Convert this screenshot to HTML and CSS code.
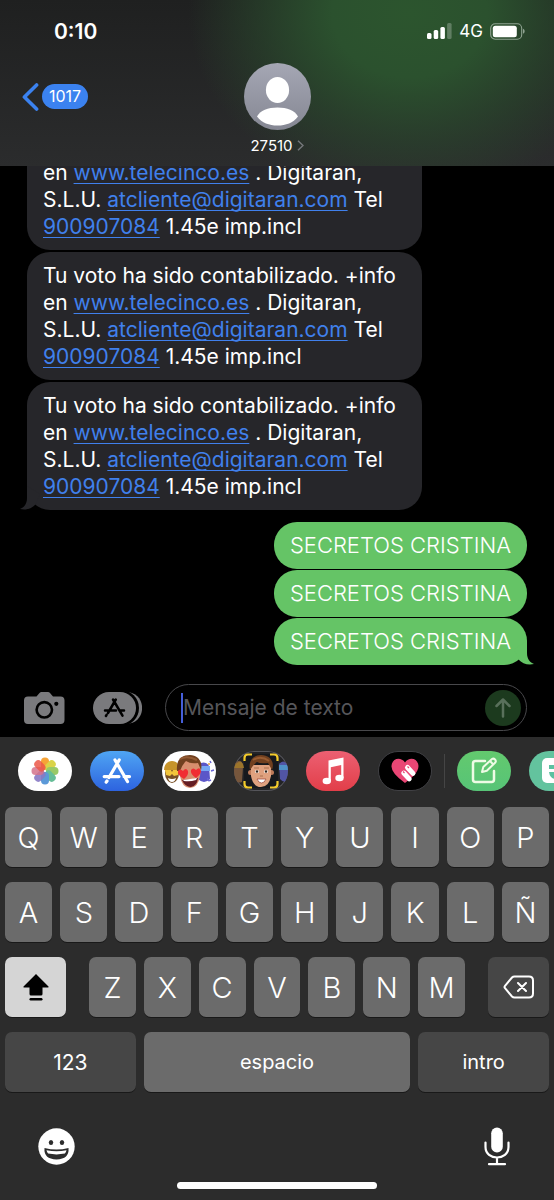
FILE: index.html
```
<!DOCTYPE html>
<html lang="es">
<head>
<meta charset="utf-8">
<meta name="viewport" content="width=device-width, initial-scale=1">
<title>27510</title>
<link rel="stylesheet" href="styles.css">
</head>
<body>
<header class="header">
  <div class="status">
    <time class="clock">0:10</time>
    <div class="status-icons">
      <svg width="25" height="16" viewBox="0 0 25 16" fill="#fff"><rect x="0" y="10" width="4.500" height="6" rx="1.500"/><rect x="6.700" y="7" width="4.500" height="9" rx="1.500"/><rect x="13.400" y="4" width="4.500" height="12" rx="1.500"/><rect x="20.100" y="0" width="4.500" height="16" rx="1.500" opacity=".25"/></svg>
      <span class="network">4G</span>
      <svg width="35" height="17" viewBox="0 0 35 17"><rect x=".7" y=".7" width="31" height="15.600" rx="4.500" fill="none" stroke="#8fa391" stroke-width="1.100"/><rect x="2.800" y="2.800" width="24" height="11.400" rx="2.500" fill="#fff"/><path d="M33 5.800c2.200.8 2.200 4.200 0 5z" fill="#8fa391"/></svg>
    </div>
  </div>
  <div class="nav">
    <button class="back" type="button" aria-label="Atrás, 1017 mensajes">
      <svg width="18" height="28" viewBox="0 0 18 28" fill="none" stroke="#3b82f0" stroke-width="3.600" stroke-linecap="round" stroke-linejoin="round"><path d="M14.600 2 2.400 14l12.200 12"/></svg>
      <span class="count">1017</span>
    </button>
    <button class="contact" type="button">
      <svg width="67" height="67" viewBox="0 0 67 67">
        <defs><linearGradient id="av" x1="0" y1="0" x2="0" y2="1"><stop offset="0" stop-color="#a5a7b4"/><stop offset="1" stop-color="#858793"/></linearGradient></defs>
        <circle cx="33.500" cy="33.500" r="33.500" fill="url(#av)"/>
        <ellipse cx="33.500" cy="27" rx="11.600" ry="13" fill="#fff"/>
        <path d="M13 53.500C16 47.500 24 44.500 33.500 44.500s17.500 3 20.500 9C49 60 42 62.500 33.500 62.500S18 60 13 53.500z" fill="#fff"/>
      </svg>
      <span class="name">27510 <svg width="7" height="11" viewBox="0 0 7 11" fill="none" stroke="#74777a" stroke-width="1.500"><path d="M1 .8 6 5.500 1 10.200"/></svg></span>
    </button>
  </div>
</header>

<main class="chat">
  <p class="bubble in">en <a href="#web">www.telecinco.es</a> . Digitaran, S.L.U. <a href="#mail">atcliente@digitaran.com</a> Tel <a href="#tel">900907084</a> 1.45e imp.incl</p>
  <p class="bubble in">Tu voto ha sido contabilizado. +info en <a href="#web">www.telecinco.es</a> . Digitaran, S.L.U. <a href="#mail">atcliente@digitaran.com</a> Tel <a href="#tel">900907084</a> 1.45e imp.incl</p>
  <p class="bubble in">Tu voto ha sido contabilizado. +info en <a href="#web">www.telecinco.es</a> . Digitaran, S.L.U. <a href="#mail">atcliente@digitaran.com</a> Tel <a href="#tel">900907084</a> 1.45e imp.incl
    <svg class="tail tail-in" width="20" height="24" viewBox="0 0 20 24" fill="#26262a"><path d="M7 0v12c0 6-3 9.500-7 11 6 1.500 12-.5 15.500-4.500L20 8z"/></svg></p>
  <div class="sent">
    <p class="bubble out">SECRETOS CRISTINA</p>
    <p class="bubble out">SECRETOS CRISTINA</p>
    <p class="bubble out">SECRETOS CRISTINA
      <svg class="tail tail-out" width="20" height="24" viewBox="0 0 20 24" fill="#65c466"><path d="M13 0v12c0 6 3 9.500 7 11-6 1.500-12-.5-15.500-4.500L0 8z"/></svg></p>
  </div>
</main>

<form class="composer">
  <button class="tool" type="button" aria-label="Cámara">
    <svg width="41" height="32" viewBox="0 0 41 32"><path d="M4 4.500h8.500L15.500 1Q16.300 0 17.500 0h6.500q1.200 0 2 1l3 3.500h7.500q4 0 4 4V28q0 4-4 4H4q-4 0-4-4V8.500q0-4 4-4z" fill="#7a7a7d"/><circle cx="20.300" cy="17.800" r="7.700" fill="none" stroke="#000" stroke-width="2.600"/><circle cx="32.300" cy="11.800" r="2.100" fill="#000"/></svg>
  </button>
  <button class="tool" type="button" aria-label="Aplicaciones">
    <svg width="49" height="32" viewBox="0 0 49 32"><path d="M33 0c21.500 0 21.500 32 0 32z" fill="#7a7a7d"/><rect x="-1" y="-2" width="47" height="36" rx="18" fill="#000"/><rect width="43" height="32" rx="16" fill="#7a7a7d"/><g fill="none" stroke="#000" stroke-width="2.500" stroke-linecap="round"><path d="M22.800 7.500 15 21M20 7.500l9.500 16.200M12 18.500h11M26.300 18.500H31M13.600 22.800l-.7 1.200"/></g></svg>
  </button>
  <div class="field">
    <span class="caret"></span>
    <input class="entry" type="text" placeholder="Mensaje de texto" aria-label="Mensaje de texto">
    <button class="send" type="button" aria-label="Enviar"><svg width="16" height="20" viewBox="0 0 16 20" fill="none" stroke="#59705b" stroke-width="2.500" stroke-linecap="round" stroke-linejoin="round"><path d="M8 18.500V1.800M1.500 8 8 1.500 14.500 8"/></svg></button>
  </div>
</form>

<section class="keyboard" aria-label="Teclado">
  <nav class="apps">
    <button class="app white" type="button" aria-label="Fotos"><svg width="30" height="30" viewBox="-15 -15 30 30"><g opacity=".9"><rect x="-4" y="-13.500" width="8" height="12.500" rx="4" fill="#f59a22"/><rect x="-4" y="-13.500" width="8" height="12.500" rx="4" fill="#d6cf35" transform="rotate(45)"/><rect x="-4" y="-13.500" width="8" height="12.500" rx="4" fill="#8fc456" transform="rotate(90)"/><rect x="-4" y="-13.500" width="8" height="12.500" rx="4" fill="#55b68c" transform="rotate(135)"/><rect x="-4" y="-13.500" width="8" height="12.500" rx="4" fill="#4a8fd4" transform="rotate(180)"/><rect x="-4" y="-13.500" width="8" height="12.500" rx="4" fill="#7b6abf" transform="rotate(225)" opacity=".9"/><rect x="-4" y="-13.500" width="8" height="12.500" rx="4" fill="#d0647f" transform="rotate(270)" opacity=".85"/><rect x="-4" y="-13.500" width="8" height="12.500" rx="4" fill="#ea4535" transform="rotate(315)" opacity=".85"/></g></svg></button>
    <button class="app store" type="button" aria-label="App Store"><svg width="30" height="26" viewBox="0 0 30 26" fill="none" stroke="#fff" stroke-width="3.200" stroke-linecap="round"><path d="M17.200 2 7 19.500M13 2l12.500 21.500M2.200 18.600H17M22 18.600h5.500M5 23l-.8 1.200"/></svg></button>
    <button class="app white" type="button" aria-label="Stickers de Memoji"><svg width="54" height="40" viewBox="0 0 54 40">
      <ellipse cx="10" cy="22" rx="7" ry="10" fill="#795126"/><path d="M2 19c0-12 16-12 16 0z" fill="#c7942b"/><path d="M3 19h6l1 2 1-2h6l-1 5-4 1-2-2-2 2-4-1z" fill="#f2c53b"/><path d="M6 27q4 2 8 0-1 4-4 4t-4-4z" fill="#fff"/>
      <path d="M36 13q8-4 11 2l1 13q-6 6-12 0z" fill="#5b56c8"/><path d="M36 15h12v5H36z" fill="#76a7f4"/><path d="M46 27q-1 4 3 2M48 10l1 2M49 20l3-1" stroke="#6864d2" stroke-width="1.500" fill="none"/><circle cx="47" cy="13" r="1" fill="#eda239"/>
      <path d="M17 14q0-8 11-8t11 9l-1 10q-2 12-10 12T18 25z" fill="#d88e6e"/><path d="M15 20C14 9 19 4 28 4c8 0 13 7 11 15l-3-7q-8 1-12-2-4 4-6 10z" fill="#71401f"/><path d="M18 8q7-4 17 1" stroke="#935b34" stroke-width="2" fill="none"/>
      <path d="M20 29q8 0 16-2-1 8-7 9-6 0-9-7z" fill="#651d24"/><path d="M21 29l14-2-1 2q-6 2-12 1z" fill="#fff"/>
      <path d="M22 28q-7-4-6-8 2-3 5 0 3-4 5 0 1 4-4 8z" fill="#f02d33"/><path d="M34 27q-6-4-5-8 2-3 5 0 4-4 5 1 0 3-5 7z" fill="#f02d33"/></svg></button>
    <button class="app ink" type="button" aria-label="Memoji"><svg width="54" height="40" viewBox="0 0 54 40">
      <path d="M0 13q8-8 9 3l-1 15q-5 2-8-3z" fill="#76563c"/><path d="M1 14q7-8 9 3H0z" fill="#9b742b"/><path d="M45 13q5-6 9 2v15q-5 2-8-2z" fill="#5155a5"/><path d="M45 14h9v5h-9z" fill="#4f91c7"/>
      <rect x="10" y="3" width="34" height="34" rx="4" fill="#17191d"/><path d="M10.500 10V7q0-3.500 3.500-3.500h4M36 3.500h4q3.500 0 3.500 3.500v3M10.500 30v3q0 3.500 3.500 3.500h4M36 36.500h4q3.500 0 3.500-3.500v-3" fill="none" stroke="#f4cb2c" stroke-width="2.200"/>
      <circle cx="16.500" cy="21.500" r="2.500" fill="#bd7a59"/><circle cx="37.500" cy="21.500" r="2.500" fill="#bd7a59"/><path d="M17 14h20v11q-2 11-10 11t-10-11z" fill="#dfa17f"/><path d="M16 19C14 10 19 4 27 4c9 0 14 7 11 15l-4-7q-8 1-11-1-3 2-7 8z" fill="#71401f"/><path d="M19 9q8-5 16 1" stroke="#975b31" stroke-width="2" fill="none"/><ellipse cx="23" cy="20.500" rx="2" ry="1.600" fill="#fff"/><ellipse cx="32" cy="20.500" rx="2" ry="1.600" fill="#fff"/><circle cx="23" cy="20.500" r="1.200" fill="#302319"/><circle cx="32" cy="20.500" r="1.200" fill="#302319"/><path d="M20 17h5M30 17h5M26 25h3" stroke="#a9704f" stroke-width="1"/><path d="M23 28h9q-1.500 4-4.500 4T23 28z" fill="#fff" stroke="#a14f43" stroke-width=".8"/></svg></button>
    <button class="app music" type="button" aria-label="Música"><svg width="24" height="28" viewBox="0 0 24 28" fill="#fff"><path d="M7.500 3.500 22.500.5V21h-2.300V8L9.800 10.200V24H7.500z"/><ellipse cx="5.800" cy="24" rx="4.200" ry="3.200"/><ellipse cx="18.500" cy="21" rx="4.200" ry="3.200"/></svg></button>
    <button class="app touch" type="button" aria-label="Digital Touch"><svg width="28" height="26" viewBox="0 0 28 26"><path d="M14 25Q0 15 .5 8C1 0 10-1.500 14 4.500 18-1.500 27 0 27.500 8 27.500 14 21 20 14 25z" fill="#ea4675"/><g transform="rotate(-43 18 17)" fill="#fff"><rect x="13" y="9.500" width="5" height="13" rx="2.500"/><rect x="19.500" y="8" width="5" height="13" rx="2.500"/></g><path d="m12 13.500 1.500 1.500M16.500 8.500l1.500 1.500" stroke="#ea4675" stroke-width="1.200"/></svg></button>
    <span class="divider"></span>
    <button class="app note" type="button" aria-label="Notas"><svg width="28" height="28" viewBox="0 0 28 28" fill="none" stroke="#eefbe5" stroke-width="2.500" stroke-linecap="round" stroke-linejoin="round"><path d="M15 4H5.500Q3 4 3 6.500v16Q3 25 5.500 25h16q2.500 0 2.500-2.500V14"/><path stroke-width="2" d="m12 15 1.300-5L22 2q1.500-1 3 .5t.3 3L16.800 13.800zM20 4l3.300 3.500"/></svg></button>
    <button class="app mint" type="button" aria-label="Stickers"><svg width="28" height="28" viewBox="0 0 28 28"><rect y="1" width="27" height="25" rx="5" fill="#fff"/><path d="M7 8h10v4H7zM7 15h14q-1 7-7 7t-7-7z" fill="#5cc0a0"/></svg></button>
  </nav>

  <div class="keys">
    <div class="row"><button class="key">Q</button><button class="key">W</button><button class="key">E</button><button class="key">R</button><button class="key">T</button><button class="key">Y</button><button class="key">U</button><button class="key">I</button><button class="key">O</button><button class="key">P</button></div>
    <div class="row"><button class="key">A</button><button class="key">S</button><button class="key">D</button><button class="key">F</button><button class="key">G</button><button class="key">H</button><button class="key">J</button><button class="key">K</button><button class="key">L</button><button class="key">Ñ</button></div>
    <div class="row row-shift">
      <button class="key shift" aria-label="Mayúsculas"><svg width="26" height="28" viewBox="0 0 26 28"><path d="M13 1 25.500 13.500q.5 1-.5 1h-5.500V21q0 1.500-1.500 1.500H8Q6.500 22.500 6.500 21v-6.500H1q-1 0-.5-1z"/><rect x="6.500" y="25" width="13" height="2.500" rx="1.200"/></svg></button>
      <div class="row letters"><button class="key">Z</button><button class="key">X</button><button class="key">C</button><button class="key">V</button><button class="key">B</button><button class="key">N</button><button class="key">M</button></div>
      <button class="key dark" aria-label="Borrar"><svg width="32" height="24" viewBox="0 0 32 24" fill="none" stroke="#fff" stroke-width="2" stroke-linecap="round" stroke-linejoin="round"><path d="M11.500 1.500H26q4 0 4 4v13q0 4-4 4H11.500q-1.500 0-2.500-1L2 13.200q-1-1.200 0-2.400L9 2.500q1-1 2.500-1zM15 8l8 8M23 8l-8 8"/></svg></button>
    </div>
    <div class="row row-space"><button class="key dark label numeric">123</button><button class="key label">espacio</button><button class="key dark label">intro</button></div>
  </div>

  <div class="dock">
    <button class="tool" type="button" aria-label="Emoji"><svg width="37" height="37" viewBox="0 0 37 37"><circle cx="18.500" cy="18.500" r="18.200" fill="#fff"/><ellipse cx="13" cy="14.500" rx="2.200" ry="2.600" fill="#2c2c2c"/><ellipse cx="24" cy="14.500" rx="2.200" ry="2.600" fill="#2c2c2c"/><path d="M6.500 20q12 3.200 24 0 1 11-12 11.500Q5.500 31 6.500 20z" fill="#2c2c2c"/><path d="M8.500 22.200q10 2.300 20 0-.4 2-1.600 3.400-8.400 1.600-16.800 0-1.200-1.400-1.600-3.400z" fill="#fff"/></svg></button>
    <button class="tool" type="button" aria-label="Dictado"><svg width="26" height="39" viewBox="0 0 26 39"><rect x="7.200" y=".5" width="11.600" height="25" rx="5.800" fill="#fff"/><path d="M1.500 15.500V20c0 14 23 14 23 0v-4.500M13 31v6M5 37.200h16" fill="none" stroke="#fff" stroke-width="2.200" stroke-linecap="round"/></svg></button>
  </div>
  <div class="home"></div>
</section>
</body>
</html>
```
FILE: styles.css
```
* {
  box-sizing: border-box;
}

body {
  margin: 0;
  height: 100vh;
  display: flex;
  flex-direction: column;
  background: #000;
  color: #fff;
  font-family: Inter, "Liberation Sans", sans-serif;
  overflow: hidden;
}

button {
  border: 0;
  padding: 0;
  margin: 0;
  background: none;
  color: inherit;
  font: inherit;
}

svg {
  display: block;
}

/* Header */
.header {
  flex: none;
  padding: 20px 29px 12px 22px;
  background:
    radial-gradient(ellipse 40% 110% at 74% 8%, #2c552e 0%, #2b512e 35%, rgba(42, 75, 45, 0.6) 66%, rgba(36, 40, 37, 0) 100%),
    linear-gradient(#1f2020, #2b2c2d);
}

.status {
  display: flex;
  justify-content: space-between;
  align-items: center;
  height: 22px;
  padding-left: 32px;
}

.clock {
  font-size: 21px;
  font-weight: 600;
}

.status-icons {
  display: flex;
  align-items: center;
  gap: 7px;
}

.network {
  font-size: 17px;
  font-weight: 400;
}

.nav {
  display: grid;
  grid-template-columns: 1fr auto 1fr;
  align-items: start;
  padding: 21px 0 0 7px;
}

.back {
  display: flex;
  align-items: center;
  gap: 2px;
  margin-left: -7px;
  height: 67px;
  justify-self: start;
}

.count {
  background: #3b82f0;
  border-radius: 13px;
  padding: 0 7px;
  font-size: 16px;
  line-height: 25px;
}

.contact {
  display: flex;
  flex-direction: column;
  align-items: center;
  gap: 7px;
}

.name {
  display: flex;
  align-items: center;
  gap: 4px;
  font-size: 15px;
  line-height: 17px;
}

/* Conversation */
.chat {
  flex: 1;
  min-height: 0;
  overflow: hidden;
  display: flex;
  flex-direction: column;
  justify-content: flex-end;
  gap: 2px;
  padding: 0 27px 19px;
}

.bubble {
  position: relative;
  flex: none;
  margin: 0;
  padding: 10px 16px;
  border-radius: 23px;
  font-size: 21px;
  line-height: 27px;
}

.in {
  width: 79%;
  background: #26262a;
}

.in:first-child {
  border-top-left-radius: 0;
  border-top-right-radius: 0;
}

.in a {
  color: #4080ec;
  text-decoration-thickness: 1px;
  text-underline-offset: 3px;
  text-decoration-skip-ink: none;
}

.sent {
  display: flex;
  flex-direction: column;
  align-items: flex-end;
  gap: 1px;
  padding-top: 10px;
}

.out {
  background: #65c466;
  font-size: 22px;
  font-weight: 300;
}

.tail {
  position: absolute;
  bottom: 0;
}

.tail-in {
  left: -7px;
}

.tail-out {
  right: -7px;
}

/* Composer */
.composer {
  flex: none;
  display: flex;
  align-items: center;
  gap: 28px;
  padding: 0 27px 6px 24px;
}

.tool {
  flex: none;
}

.field {
  flex: 1;
  min-width: 0;
  height: 47px;
  margin-left: -5px;
  display: flex;
  align-items: center;
  padding: 0 5px 0 15px;
  border: 1px solid #48484b;
  border-radius: 24px;
}

.caret {
  flex: none;
  width: 2px;
  height: 30px;
  background: #465fdb;
}

.entry {
  flex: 1;
  min-width: 0;
  border: 0;
  padding: 0;
  outline: 0;
  background: none;
  color: #fff;
  font: inherit;
  font-size: 21px;
}

.entry::placeholder {
  color: #56565a;
  opacity: 1;
}

.send {
  flex: none;
  display: grid;
  place-items: center;
  width: 36px;
  height: 36px;
  border-radius: 50%;
  background: #1c3a1e;
}

/* Keyboard */
.keyboard {
  flex: none;
  background: #2c2c2c;
  padding-bottom: 11px;
}

.apps {
  display: flex;
  gap: 18px;
  padding: 14px 0 16px 18px;
  overflow: hidden;
}

.app {
  flex: none;
  display: grid;
  place-items: center;
  width: 54px;
  height: 40px;
  border-radius: 20px;
  overflow: hidden;
}

.white {
  background: #fff;
}

.store {
  background: linear-gradient(#4fa5f3, #2d63df);
}

.ink {
  background: #232326;
  box-shadow: inset 0 0 0 1px #55555a;
}

.music {
  background: linear-gradient(#ec6072, #e23e49);
}

.touch {
  background: #000;
  border: 1px solid #404044;
}

.note {
  background: linear-gradient(#63c96e, #57c477);
}

.mint {
  background: #63c39e;
}

.divider {
  flex: none;
  width: 1px;
  height: 34px;
  margin: 3px -6px;
  background: #454545;
}

.keys {
  display: flex;
  flex-direction: column;
  gap: 15px;
  padding: 0 5px;
}

.row {
  display: flex;
  gap: 8px;
}

.row-shift {
  gap: 23px;
}

.row-shift > .key {
  flex: 61 1 0;
}

.letters {
  flex: 376 1 0;
}

.key {
  flex: 1 1 0;
  min-width: 0;
  height: 60px;
  display: flex;
  align-items: center;
  justify-content: center;
  border-radius: 7px;
  background: #6b6b6b;
  box-shadow: 0 1px 0 #191919;
  font-size: 29px;
  font-weight: 300;
}

.dark {
  background: #464646;
}

.shift {
  background: #d5d5d5;
}

.label {
  font-size: 20px;
  font-weight: 400;
}

.numeric {
  font-size: 21px;
}

.row-space > .key {
  flex: 131 1 0;
}

.row-space > .key:nth-child(2) {
  flex-grow: 267;
}

.dock {
  display: flex;
  justify-content: space-between;
  align-items: center;
  height: 40px;
  margin-top: 34px;
  padding: 0 44px 0 38px;
}

.home {
  width: 36%;
  height: 7px;
  margin: 16px auto 0;
  border-radius: 4px;
  background: #fff;
}
```
